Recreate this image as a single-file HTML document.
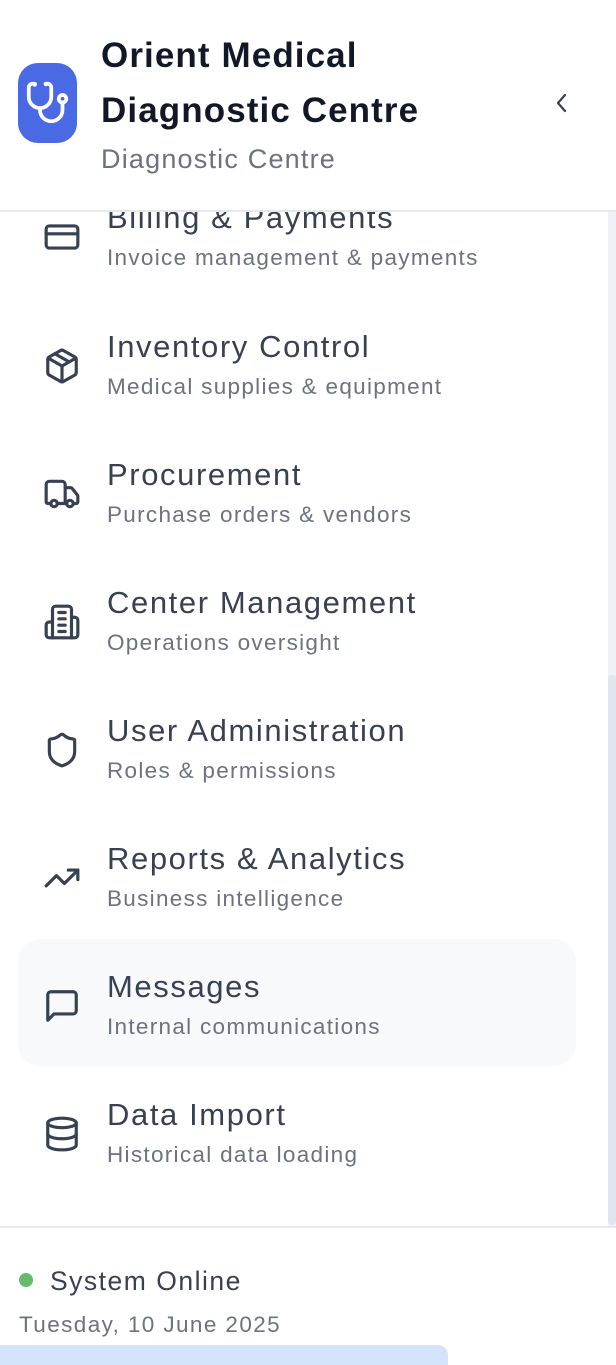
<!DOCTYPE html>
<html><head><meta charset="utf-8"><style>
*{margin:0;padding:0;box-sizing:border-box}
body{width:616px;height:1359px;overflow:hidden;background:#fff;font-family:"Liberation Sans",sans-serif;position:relative}
.hdr{position:absolute;left:0;top:0;width:616px;height:212px;background:#fff;border-bottom:2px solid #e5e7eb;z-index:5}
.logo{position:absolute;left:18px;top:63px;width:59px;height:80px;background:#4a6ae5;border-radius:20px}
.t1{position:absolute;left:101px;font-size:35px;font-weight:bold;color:#111827;line-height:40px;white-space:nowrap;letter-spacing:1.1px}
.sub{position:absolute;left:101px;top:143px;font-size:27px;color:#6b7280;line-height:32px;letter-spacing:1.2px}
.item{position:absolute;left:0;width:608px;height:80px}
.item svg{position:absolute;left:43px;top:20px}
.it{position:absolute;left:107px;top:0;font-size:31px;line-height:40px;color:#374151;white-space:nowrap;letter-spacing:1.6px}
.is{position:absolute;left:107px;font-size:22.5px;line-height:30px;color:#6b7280;white-space:nowrap;letter-spacing:1.3px}
.track{position:absolute;left:608px;top:212px;width:8px;height:1015px;background:#eef2f7}
.thumb{position:absolute;left:608px;top:675px;width:8px;height:550px;background:#e1e5ee;border-radius:4px}
.ftr{position:absolute;left:0;top:1226px;width:616px;height:2px;background:#e5e7eb}
</style></head><body>
<div class="track"></div><div class="thumb"></div>
<div style="position:absolute;left:18px;top:939px;width:558px;height:127px;background:#f8f9fb;border-radius:22px"></div>

<div class="item" style="top:198px"><svg width="38" height="38" viewBox="0 0 24 24" fill="none" stroke="#374151" stroke-width="2" stroke-linecap="round" stroke-linejoin="round"><rect x="2" y="5" width="20" height="14" rx="2"/><line x1="2" y1="10" x2="22" y2="10"/></svg><div class="it">Billing &amp; Payments</div><div class="is" style="top:45px">Invoice management &amp; payments</div></div>

<div class="item" style="top:327px"><svg width="38" height="38" viewBox="0 0 24 24" fill="none" stroke="#374151" stroke-width="2" stroke-linecap="round" stroke-linejoin="round"><path d="M21 8a2 2 0 0 0-1-1.73l-7-4a2 2 0 0 0-2 0l-7 4A2 2 0 0 0 3 8v8a2 2 0 0 0 1 1.73l7 4a2 2 0 0 0 2 0l7-4A2 2 0 0 0 21 16Z"/><path d="m3.3 7 8.7 5 8.7-5"/><path d="M12 22V12"/><path d="m7.5 4.27 9 5.15"/></svg><div class="it">Inventory Control</div><div class="is" style="top:45px">Medical supplies &amp; equipment</div></div>

<div class="item" style="top:455px"><svg width="38" height="38" viewBox="0 0 24 24" fill="none" stroke="#374151" stroke-width="2" stroke-linecap="round" stroke-linejoin="round"><path d="M14 18V6a2 2 0 0 0-2-2H4a2 2 0 0 0-2 2v11a1 1 0 0 0 1 1h2"/><path d="M15 18H9"/><path d="M19 18h2a1 1 0 0 0 1-1v-3.65a1 1 0 0 0-.22-.62l-3.48-4.35A1 1 0 0 0 17.520 8H14"/><circle cx="17" cy="18" r="2"/><circle cx="7" cy="18" r="2"/></svg><div class="it">Procurement</div><div class="is" style="top:45px">Purchase orders &amp; vendors</div></div>

<div class="item" style="top:583px"><svg width="38" height="38" viewBox="0 0 24 24" fill="none" stroke="#374151" stroke-width="2" stroke-linecap="round" stroke-linejoin="round"><path d="M6 22V4a2 2 0 0 1 2-2h8a2 2 0 0 1 2 2v18Z"/><path d="M6 12H4a2 2 0 0 0-2 2v6a2 2 0 0 0 2 2h2"/><path d="M18 9h2a2 2 0 0 1 2 2v9a2 2 0 0 1-2 2h-2"/><path d="M10 6h4"/><path d="M10 10h4"/><path d="M10 14h4"/><path d="M10 18h4"/></svg><div class="it">Center Management</div><div class="is" style="top:45px">Operations oversight</div></div>

<div class="item" style="top:711px"><svg width="38" height="38" viewBox="0 0 24 24" fill="none" stroke="#374151" stroke-width="2" stroke-linecap="round" stroke-linejoin="round"><path d="M20 13c0 5-3.5 7.5-7.66 8.95a1 1 0 0 1-.67-.01C7.5 20.5 4 18 4 13V6a1 1 0 0 1 1-1c2 0 4.5-1.2 6.24-2.72a1.17 1.17 0 0 1 1.52 0C14.51 3.81 17 5 19 5a1 1 0 0 1 1 1z"/></svg><div class="it">User Administration</div><div class="is" style="top:45px">Roles &amp; permissions</div></div>

<div class="item" style="top:839px"><svg width="38" height="38" viewBox="0 0 24 24" fill="none" stroke="#374151" stroke-width="2" stroke-linecap="round" stroke-linejoin="round"><polyline points="22 7 13.5 15.5 8.5 10.5 2 17"/><polyline points="16 7 22 7 22 13"/></svg><div class="it">Reports &amp; Analytics</div><div class="is" style="top:45px">Business intelligence</div></div>

<div class="item" style="top:967px"><svg width="38" height="38" viewBox="0 0 24 24" fill="none" stroke="#374151" stroke-width="2" stroke-linecap="round" stroke-linejoin="round"><path d="M21 15a2 2 0 0 1-2 2H7l-4 4V5a2 2 0 0 1 2-2h14a2 2 0 0 1 2 2z"/></svg><div class="it">Messages</div><div class="is" style="top:45px">Internal communications</div></div>

<div class="item" style="top:1095px"><svg width="38" height="38" viewBox="0 0 24 24" fill="none" stroke="#374151" stroke-width="2" stroke-linecap="round" stroke-linejoin="round"><ellipse cx="12" cy="5" rx="9" ry="3"/><path d="M3 5V19A9 3 0 0 0 21 19V5"/><path d="M3 12A9 3 0 0 0 21 12"/></svg><div class="it">Data Import</div><div class="is" style="top:45px">Historical data loading</div></div>

<div class="hdr">
<div class="logo"><svg style="position:absolute;left:7px;top:17px" width="45" height="45" viewBox="0 0 24 24" fill="none" stroke="#fff" stroke-width="2" stroke-linecap="round" stroke-linejoin="round"><path d="M4.8 2.3A.3.3 0 1 0 5 2H4a2 2 0 0 0-2 2v5a6 6 0 0 0 6 6 6 6 0 0 0 6-6V4a2 2 0 0 0-2-2h-1a.2.2 0 1 0 .3.3"/><path d="M8 15v1a6 6 0 0 0 6 6 6 6 0 0 0 6-6v-4"/><circle cx="20" cy="10" r="2"/></svg></div>
<div class="t1" style="top:36px">Orient Medical</div>
<div class="t1" style="top:91px">Diagnostic Centre</div>
<div class="sub">Diagnostic Centre</div>
<svg style="position:absolute;left:550px;top:91px" width="22" height="24" viewBox="0 0 22 24" fill="none" stroke="#374151" stroke-width="2.2" stroke-linecap="round" stroke-linejoin="round"><path d="M15 4l-7 8 7 8"/></svg>
</div>

<div class="ftr"></div>
<div style="position:absolute;left:19px;top:1273px;width:14px;height:14px;border-radius:50%;background:#66bb6a"></div>
<div style="position:absolute;left:50px;top:1264px;font-size:26.5px;line-height:34px;color:#374151;letter-spacing:1.5px">System Online</div>
<div style="position:absolute;left:19px;top:1310px;font-size:22.5px;line-height:30px;color:#6b7280;letter-spacing:1.4px">Tuesday, 10 June 2025</div>
<div style="position:absolute;left:0;top:1345px;width:448px;height:20px;background:#d3e3fa;border-radius:0 10px 0 0"></div>
</body></html>
